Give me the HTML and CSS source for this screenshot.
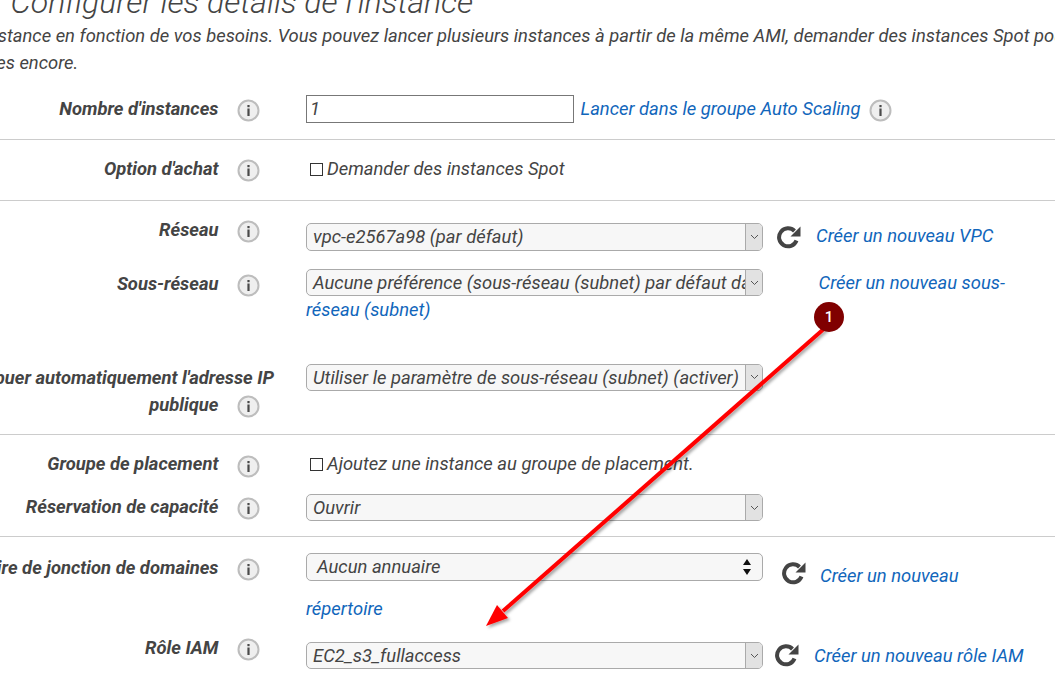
FILE: index.html
```html
<!DOCTYPE html>
<html lang="fr">
<head>
  <meta charset="UTF-8">
  <title>Configurer les détails de l'instance</title>
  <link rel="stylesheet" href="styles.css">
</head>
<body>
  <svg width="0" height="0" class="defs">
    <symbol id="info" viewBox="0 0 23 23">
      <circle cx="11.5" cy="11.5" r="10" fill="#efefef" stroke="#bdbdbd" stroke-width="2"/>
      <rect x="10.4" y="9.5" width="2.2" height="7.5" fill="#4a4a4a"/>
      <rect x="10.4" y="6" width="2.2" height="2.2" fill="#4a4a4a"/>
    </symbol>
    <symbol id="refresh" viewBox="0 0 24 24">
      <path d="M19.5 15.5A9 9 0 1 1 17.5 6" fill="none" stroke="#444" stroke-width="4"/>
      <path d="M23.5 1.5V11.5H13.5Z" fill="#444"/>
    </symbol>
  </svg>

  <div class="page">
    <h1 class="title">Étape 3 : Configurer les détails de l'instance</h1>
    <p class="intro">Configurez l'instance en fonction de vos besoins. Vous pouvez lancer plusieurs instances à partir de la même AMI, demander des instances Spot pour réduire vos coûts, et bien<br>&nbsp;d'autres choses encore.</p>

    <section class="group g-count">
      <div class="row">
        <div class="label">Nombre d'instances <svg class="info"><use href="#info"/></svg></div>
        <div class="field">
          <span class="input">1</span>
          <a class="link link-scaling">Lancer dans le groupe Auto Scaling</a>
          <svg class="info info-after"><use href="#info"/></svg>
        </div>
      </div>
    </section>

    <section class="group g-spot">
      <div class="row">
        <div class="label">Option d'achat <svg class="info"><use href="#info"/></svg></div>
        <div class="field"><span class="check"></span>Demander des instances Spot</div>
      </div>
    </section>

    <section class="group g-network">
      <div class="row r-vpc">
        <div class="label">Réseau <svg class="info"><use href="#info"/></svg></div>
        <div class="field">
          <span class="select tall"><span class="value">vpc-e2567a98 (par défaut)</span><span class="arrow"><svg width="9" height="6" viewBox="0 0 9 6"><path d="M1 1l3.5 3.5L8 1" fill="none" stroke="#555"/></svg></span></span>
          <svg class="refresh"><use href="#refresh"/></svg>
          <a class="link link-vpc">Créer un nouveau VPC</a>
        </div>
      </div>
      <div class="row r-subnet">
        <div class="label">Sous-réseau <svg class="info"><use href="#info"/></svg></div>
        <div class="field">
          <span class="select"><span class="value">Aucune préférence (sous-réseau (subnet) par défaut dans une zone)</span><span class="arrow"><svg width="9" height="6" viewBox="0 0 9 6"><path d="M1 1l3.5 3.5L8 1" fill="none" stroke="#555"/></svg></span></span>
          <a class="link link-subnet">Créer un nouveau sous-réseau (subnet)</a>
        </div>
      </div>
      <div class="row r-ip">
        <div class="label">Attribuer automatiquement l'adresse IP publique <svg class="info"><use href="#info"/></svg></div>
        <div class="field">
          <span class="select"><span class="value">Utiliser le paramètre de sous-réseau (subnet) (activer)</span><span class="arrow"><svg width="9" height="6" viewBox="0 0 9 6"><path d="M1 1l3.5 3.5L8 1" fill="none" stroke="#555"/></svg></span></span>
        </div>
      </div>
    </section>

    <section class="group g-placement">
      <div class="row">
        <div class="label">Groupe de placement <svg class="info"><use href="#info"/></svg></div>
        <div class="field"><span class="check"></span>Ajoutez une instance au groupe de placement.</div>
      </div>
      <div class="row r-capacity">
        <div class="label">Réservation de capacité <svg class="info"><use href="#info"/></svg></div>
        <div class="field">
          <span class="select"><span class="value">Ouvrir</span><span class="arrow"><svg width="9" height="6" viewBox="0 0 9 6"><path d="M1 1l3.5 3.5L8 1" fill="none" stroke="#555"/></svg></span></span>
        </div>
      </div>
    </section>

    <section class="group g-domain">
      <div class="row r-dir">
        <div class="label">Répertoire de jonction de domaines <svg class="info"><use href="#info"/></svg></div>
        <div class="field">
          <span class="select tall stepper"><span class="value">Aucun annuaire</span><span class="updown"><svg width="10" height="18" viewBox="0 0 10 18"><path d="M5 1l4 6H1zM5 17l4-6H1z" fill="#111"/></svg></span></span>
          <svg class="refresh refresh-dir"><use href="#refresh"/></svg>
          <a class="link link-dir">Créer un nouveau répertoire</a>
        </div>
      </div>
      <div class="row r-iam">
        <div class="label">Rôle IAM <svg class="info"><use href="#info"/></svg></div>
        <div class="field">
          <span class="select"><span class="value">EC2_s3_fullaccess</span><span class="arrow"><svg width="9" height="6" viewBox="0 0 9 6"><path d="M1 1l3.5 3.5L8 1" fill="none" stroke="#555"/></svg></span></span>
          <svg class="refresh refresh-iam"><use href="#refresh"/></svg>
          <a class="link link-iam">Créer un nouveau rôle IAM</a>
        </div>
      </div>
    </section>
  </div>

  <!-- annotation par-dessus la capture -->
  <svg class="arrow-note" width="1055" height="688" viewBox="0 0 1055 688">
    <defs>
      <filter id="ombre" x="-10%" y="-10%" width="120%" height="120%">
        <feDropShadow dx="2" dy="2" stdDeviation="1.5" flood-color="#000" flood-opacity="0.35"/>
      </filter>
    </defs>
    <g filter="url(#ombre)">
      <path d="M826 327L503 611" stroke="#f00" stroke-width="4" fill="none"/>
      <path d="M486 626L497 605L508 618Z" fill="#f00"/>
    </g>
  </svg>
  <div class="badge">1</div>
</body>
</html>
```

FILE: styles.css
```css
html, body {
  margin: 0;
  height: 688px;
  overflow: hidden;
  background: #fff;
}
body {
  font-family: Roboto, "Liberation Sans", sans-serif;
  font-style: italic;
  font-size: 18.4px;
  line-height: 27px;
  color: #444;
  position: relative;
}
.defs {
  display: block;
  height: 0;
}
.page {
  margin-left: -100px;
  width: 1300px;
}
.title {
  margin: -16px 0 0 -14px;
  font-size: 32px;
  line-height: 36px;
  font-weight: 300;
  white-space: nowrap;
}
.intro {
  margin: 2px 0 0 -14px;
  white-space: nowrap;
}
.group {
  border-bottom: 1px solid #ccc;
}
.g-count {
  padding: 19px 0 16px;
}
.g-spot {
  padding: 15px 0 18px;
}
.g-network {
  padding: 15px 0 16px;
}
.g-placement {
  padding: 15px 0 15px;
}
.g-domain {
  border-bottom: 0;
  padding: 16px 0 0;
}
.row {
  display: flex;
  align-items: flex-start;
}
.r-subnet {
  margin-top: 19px;
}
.r-ip {
  margin-top: 41px;
}
.r-capacity {
  margin-top: 15px;
}
.r-iam {
  margin-top: 9px;
}
.label {
  width: 374px;
  flex: none;
  text-align: right;
  font-weight: 700;
}
.r-dir .label {
  margin-top: 1px;
}
.info {
  width: 23px;
  height: 23px;
  margin: 1px 14px 0;
  vertical-align: middle;
}
.field {
  margin-left: 32px;
  width: 725px;
}
.input {
  display: inline-block;
  width: 263px;
  height: 26px;
  line-height: 26px;
  padding-left: 3px;
  border: 1px solid #777;
  vertical-align: baseline;
}
.link {
  color: #1166bb;
}
.link-scaling {
  margin-left: 2px;
}
.info-after {
  margin-left: 4px;
  margin-right: 0;
}
.check {
  display: inline-block;
  width: 11px;
  height: 11px;
  border: 1px solid #333;
  margin: 0 4px 0 4px;
  vertical-align: -1px;
}
.select {
  display: inline-flex;
  align-items: stretch;
  width: 457px;
  height: 27px;
  box-sizing: border-box;
  border: 1px solid #aaa;
  border-radius: 5px;
  background: #f7f7f7;
  vertical-align: middle;
  overflow: hidden;
}
.tall {
  height: 28px;
}
.value {
  flex: 1;
  padding-left: 6px;
  line-height: 25px;
  white-space: nowrap;
  overflow: hidden;
}
.arrow {
  flex: none;
  width: 16px;
  display: flex;
  align-items: center;
  justify-content: center;
  background: #e2e2e2;
  border-left: 1px solid #aaa;
}
.stepper .value {
  padding-left: 10px;
}
.updown {
  flex: none;
  width: 20px;
  display: flex;
  align-items: center;
}
.refresh {
  width: 24px;
  height: 24px;
  margin-left: 9px;
  vertical-align: middle;
}
.link-vpc {
  margin-left: 11px;
}
.link-subnet {
  margin-left: 51px;
}
.refresh-dir {
  margin-left: 14px;
}
.link-dir {
  margin-left: 10px;
  line-height: 33px;
}
.refresh-iam {
  margin-left: 7px;
}
.link-iam {
  margin-left: 11px;
}
.r-vpc .field {
  margin-top: 6px;
}
.r-subnet .field {
  margin-top: -1px;
}
.r-subnet .select {
  vertical-align: baseline;
}
.r-ip .field {
  margin-top: -2px;
}
.r-capacity .field {
  margin-top: 0;
}
.r-iam .field {
  margin-top: 8px;
}
.r-iam .select {
  vertical-align: baseline;
}
.r-iam .refresh {
  vertical-align: -5px;
}
.r-dir .select {
  vertical-align: 9px;
}
.r-dir .refresh {
  vertical-align: -3px;
}
.arrow-note {
  position: absolute;
  left: 0;
  top: 0;
}
.badge {
  position: absolute;
  left: 814px;
  top: 302px;
  width: 30px;
  height: 30px;
  border-radius: 50%;
  background: #800000;
  color: #fff;
  font-style: normal;
  font-weight: 500;
  font-size: 15px;
  line-height: 30px;
  text-align: center;
}
```
